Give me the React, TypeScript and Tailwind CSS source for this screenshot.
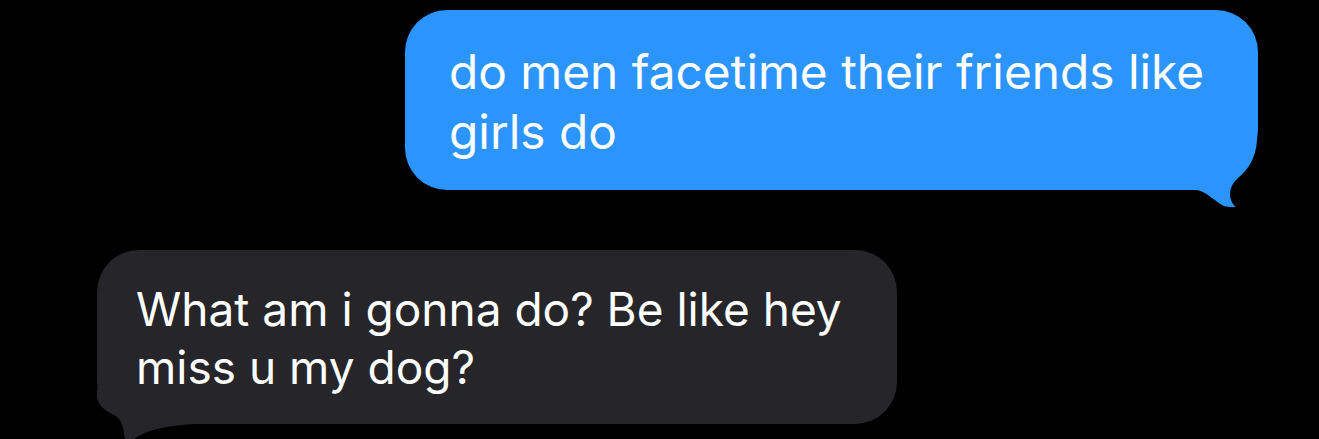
const font = { fontFamily: "Inter, 'Liberation Sans', sans-serif" };

function BlueTail() {
  return (
    <svg className="absolute left-[775px] top-[120px]" width="90" height="80" viewBox="0 0 90 80">
      <rect width="90" height="80" fill="#000" />
      <path
        d="M0,0 L78,0 L77,10 C76,28 68,40 58,48 C50,55 49,63 51,70 C52,73 54,76 56,77 C50,77 45,77 42,75 C33,70 27,62 17,60 L0,60 Z"
        fill="#2c95fd"
      />
    </svg>
  );
}

function GreyTail() {
  return (
    <svg className="absolute left-[-7px] top-[140px]" width="130" height="49" viewBox="0 0 130 49">
      <rect width="130" height="49" fill="#000" />
      <path
        d="M7,0 L7,7 C8,15 14,20 22,24 C29,27 32,32 33,38 L35,49 L44,49 C50,45 58,41 67,39 C80,36 95,34 110,34 L130,34 L130,0 Z"
        fill="#262529"
      />
    </svg>
  );
}

export default function App() {
  return (
    <div className="h-[439px] w-[1319px] overflow-hidden bg-black" style={font}>
      <div className="flex justify-end pt-[10px] pr-[61px]">
        <div className="relative h-[180px] w-[853px] rounded-[42px] bg-[#2c95fd] pl-[44px] pt-[32px] text-[47.8px] leading-[60px] text-white">
          <p className="relative">
            do men facetime their friends like
            <br />
            girls do
          </p>
          <BlueTail />
        </div>
      </div>
      <div className="mt-[60px] pl-[97px]">
        <div className="relative h-[174px] w-[800px] rounded-[42px] bg-[#262529] pl-[39px] pt-[30px] text-[46px] leading-[58px] text-white">
          <GreyTail />
          <p className="relative">
            What am i gonna do? Be like hey
            <br />
            miss u my dog?
          </p>
        </div>
      </div>
    </div>
  );
}
